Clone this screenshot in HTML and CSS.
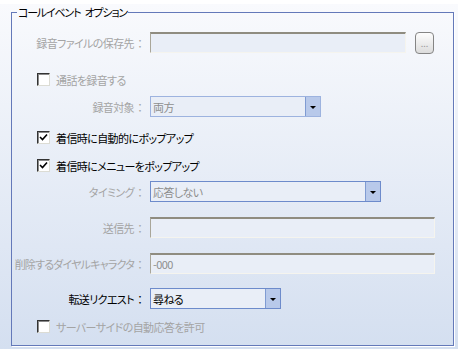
FILE: index.html
```html
<!DOCTYPE html>
<html lang="ja">
  <head>
    <meta charset="UTF-8" />
    <meta name="viewport" content="width=device-width, initial-scale=1.0" />
    <title>コールイベント オプション</title>
    <link rel="stylesheet" href="styles.css">
  </head>
  <body>
    <div class="panel">
      <fieldset class="group">
        <legend>コールイベント オプション</legend>

        <div class="row">
          <span class="row-label disabled">録音ファイルの保存先<span class="colon">：</span></span>
          <span class="field text-field path-field"></span>
          <span class="browse-btn">...</span>
        </div>

        <div class="row check-row gap-r2">
          <span class="checkbox"></span>
          <span class="disabled">通話を録音する</span>
        </div>

        <div class="row gap-r3">
          <span class="row-label disabled">録音対象<span class="colon">：</span></span>
          <span class="field select light target-select">
            <span class="select-value disabled-value">両方</span>
            <span class="select-btn"><span class="arrow"></span></span>
          </span>
        </div>

        <div class="row check-row gap-r4">
          <span class="checkbox checked">
            <svg width="9" height="9" viewBox="0 0 9 9"><path d="M1 4 L3.5 6.5 L8 1.5" fill="none" stroke="#000" stroke-width="1.6"/></svg>
          </span>
          <span>着信時に自動的にポップアップ</span>
        </div>

        <div class="row check-row gap-r5">
          <span class="checkbox checked">
            <svg width="9" height="9" viewBox="0 0 9 9"><path d="M1 4 L3.5 6.5 L8 1.5" fill="none" stroke="#000" stroke-width="1.6"/></svg>
          </span>
          <span>着信時にメニューをポップアップ</span>
        </div>

        <div class="row gap-r6">
          <span class="row-label disabled">タイミング<span class="colon">：</span></span>
          <span class="field select timing-select">
            <span class="select-value disabled-value">応答しない</span>
            <span class="select-btn"><span class="arrow"></span></span>
          </span>
        </div>

        <div class="row gap-l">
          <span class="row-label disabled">送信先<span class="colon">：</span></span>
          <span class="field text-field wide-field"></span>
        </div>

        <div class="row gap-l">
          <span class="row-label disabled tight">削除するダイヤルキャラクタ<span class="colon">：</span></span>
          <span class="field text-field wide-field"><span class="disabled-value">-000</span></span>
        </div>

        <div class="row gap-r9">
          <span class="row-label">転送リクエスト<span class="colon">：</span></span>
          <span class="field select transfer-select">
            <span class="select-value">尋ねる</span>
            <span class="select-btn"><span class="arrow"></span></span>
          </span>
        </div>

        <div class="row check-row gap-r10">
          <span class="checkbox"></span>
          <span class="disabled">サーバーサイドの自動応答を許可</span>
        </div>
      </fieldset>
    </div>
  </body>
</html>
```

FILE: styles.css
```css
body {
  margin: 0;
  background: #fff;
  font-family: "Noto Sans CJK JP", "Noto Sans", sans-serif;
  font-size: 11px;
  font-feature-settings: "palt";
  letter-spacing: -0.6px;
  color: #000;
}

.panel {
  width: 458px;
  height: 345px;
  margin-top: 4px;
  background: linear-gradient(#f9fafd, #d4dff0);
  padding-top: 1px;
  box-sizing: border-box;
}

.group {
  margin: 0 0 0 11px;
  width: 443px;
  padding: 12px 0 8px 0;
  box-sizing: border-box;
  border: 1px solid #6479b9;
  box-shadow: 1px 1px 0 #fff;
}

.group legend {
  margin-left: 5px;
  padding: 0 1px;
  line-height: 15px;
  letter-spacing: -1.2px;
  word-spacing: 3px;
}

.row {
  display: flex;
  align-items: center;
  height: 21px;
}

/* row spacing, taken from the dialog */
.gap-r2 {
  margin-top: 16px;
}

.gap-r3 {
  margin-top: 6px;
}

.gap-r4 {
  margin-top: 10px;
}

.gap-r5 {
  margin-top: 7px;
}

.gap-r6 {
  margin-top: 5px;
}

.gap-l {
  margin-top: 15px;
}

.gap-r9 {
  margin-top: 14px;
}

.gap-r10 {
  margin-top: 7px;
}

.row-label {
  flex: none;
  width: 134px;
  margin-right: 4px;
  white-space: nowrap;
  display: flex;
  justify-content: flex-end;
}

.tight {
  letter-spacing: -0.8px;
}

.colon {
  display: inline-block;
  width: 12px;
  text-align: center;
  font-feature-settings: normal;
  letter-spacing: 0;
}

.disabled {
  color: #a4a4a4;
}

.disabled-value {
  color: #8e8e8e;
}

.check-row {
  padding-left: 25px;
}

.checkbox {
  width: 11px;
  height: 11px;
  margin-right: 6px;
  background: #fff;
  border-top: 1px solid #333;
  border-left: 1px solid #333;
  border-right: 1px solid #dcdcd4;
  border-bottom: 1px solid #dcdcd4;
  box-shadow: inset 1px 1px 0 #8a8a8a;
  display: flex;
  align-items: center;
  justify-content: center;
  flex: none;
}

.field {
  height: 21px;
  box-sizing: border-box;
  background: #e9eef7;
  display: flex;
  align-items: center;
}

.text-field {
  border-top: 2px solid #8f8c80;
  border-left: 1px solid #a9a699;
  border-right: 1px solid #f5f4ee;
  border-bottom: 1px solid #f5f4ee;
  padding-left: 2px;
}

.path-field {
  width: 256px;
}

.wide-field {
  width: 285px;
}

.browse-btn {
  width: 19px;
  height: 22px;
  margin-left: 9px;
  box-sizing: border-box;
  border: 1px solid #858585;
  border-radius: 4px;
  background: linear-gradient(#fdfdfd, #dcdcdc);
  color: #9a9a9a;
  font-size: 9px;
  line-height: 9px;
  letter-spacing: 0;
  display: flex;
  align-items: flex-end;
  justify-content: center;
  padding-bottom: 5px;
}

.select {
  border: 1px solid #6d8bcb;
}

.select.light {
  border-color: #9db3df;
}

.select-value {
  flex: 1;
  padding-left: 2px;
}

.select-btn {
  width: 15px;
  height: 100%;
  box-sizing: border-box;
  background: #b8c9ea;
  border-left: 1px solid #7f9bd2;
  display: flex;
  align-items: center;
  justify-content: center;
}

.arrow {
  width: 0;
  height: 0;
  border-left: 3px solid transparent;
  border-right: 3px solid transparent;
  border-top: 3px solid #000;
  margin-top: 2px;
}

.target-select {
  width: 171px;
}

.timing-select {
  width: 231px;
}

.transfer-select {
  width: 131px;
}
```
